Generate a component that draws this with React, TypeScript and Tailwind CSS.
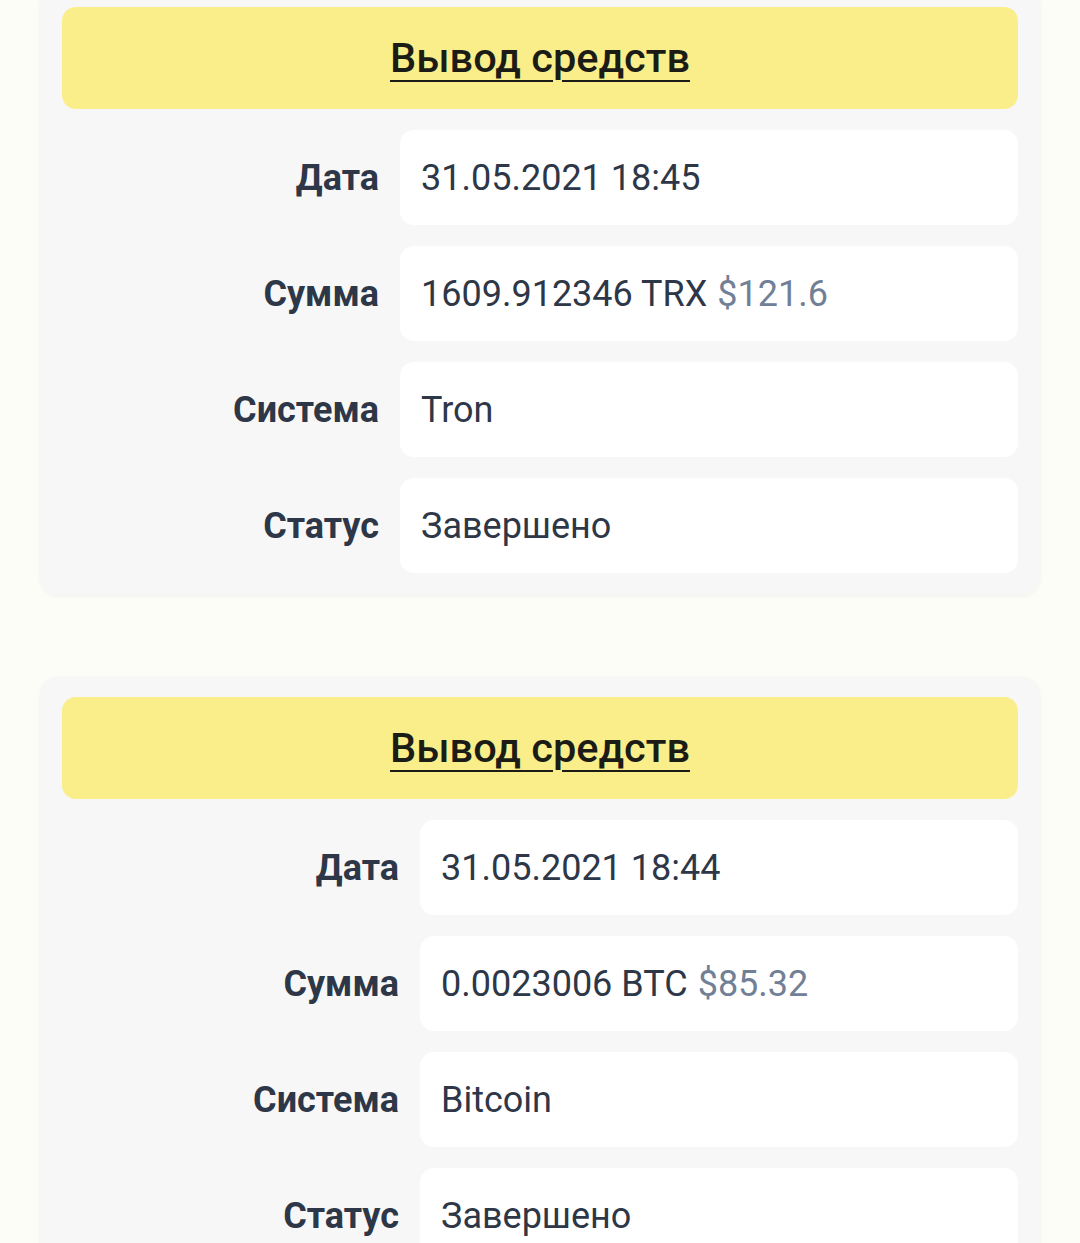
import React from "react";

type Row = { label: string; value: string; usd?: string };

const cards: { labelWidth: string; rows: Row[] }[] = [
  {
    labelWidth: "w-[317px]",
    rows: [
      { label: "Дата", value: "31.05.2021 18:45" },
      { label: "Сумма", value: "1609.912346 TRX", usd: "$121.6" },
      { label: "Система", value: "Tron" },
      { label: "Статус", value: "Завершено" },
    ],
  },
  {
    labelWidth: "w-[337px]",
    rows: [
      { label: "Дата", value: "31.05.2021 18:44" },
      { label: "Сумма", value: "0.0023006 BTC", usd: "$85.32" },
      { label: "Система", value: "Bitcoin" },
      { label: "Статус", value: "Завершено" },
    ],
  },
];

function Card({ labelWidth, rows }: { labelWidth: string; rows: Row[] }) {
  return (
    <div className="rounded-[18px] bg-[#f7f7f7] px-[22px] pt-[20px] pb-[22px] shadow-[0_1px_4px_rgba(0,0,0,0.05)]">
      {/* header */}
      <div className="flex h-[102px] items-center justify-center rounded-[14px] bg-[#f9ee89]">
        <span className="text-[41.5px] font-medium text-[#1c1c17] underline decoration-[2px] underline-offset-[8px]">
          Вывод средств
        </span>
      </div>

      <div className="mt-[21px] flex flex-col gap-[21px]">
        {rows.map((r) => (
          <div key={r.label} className="flex items-center gap-[21px]">
            <div className={`${labelWidth} shrink-0 text-right text-[36px] font-bold text-[#2d3748]`}>
              {r.label}
            </div>
            <div className="flex h-[95px] flex-1 items-center rounded-[14px] bg-white px-[21px] text-[36px] text-[#2d3748]">
              {r.value}
              {r.usd && <span className="ml-[10px] text-[#718096]">{r.usd}</span>}
            </div>
          </div>
        ))}
      </div>
    </div>
  );
}

export default function App() {
  return (
    <div
      className="min-h-[1243px] overflow-hidden bg-[#fdfdf8] px-[40px]"
      style={{ fontFamily: "Roboto, 'Noto Sans', sans-serif" }}
    >
      <div className="-mt-[13px] flex flex-col gap-[82px]">
        {cards.map((c, i) => (
          <Card key={i} {...c} />
        ))}
      </div>
    </div>
  );
}
